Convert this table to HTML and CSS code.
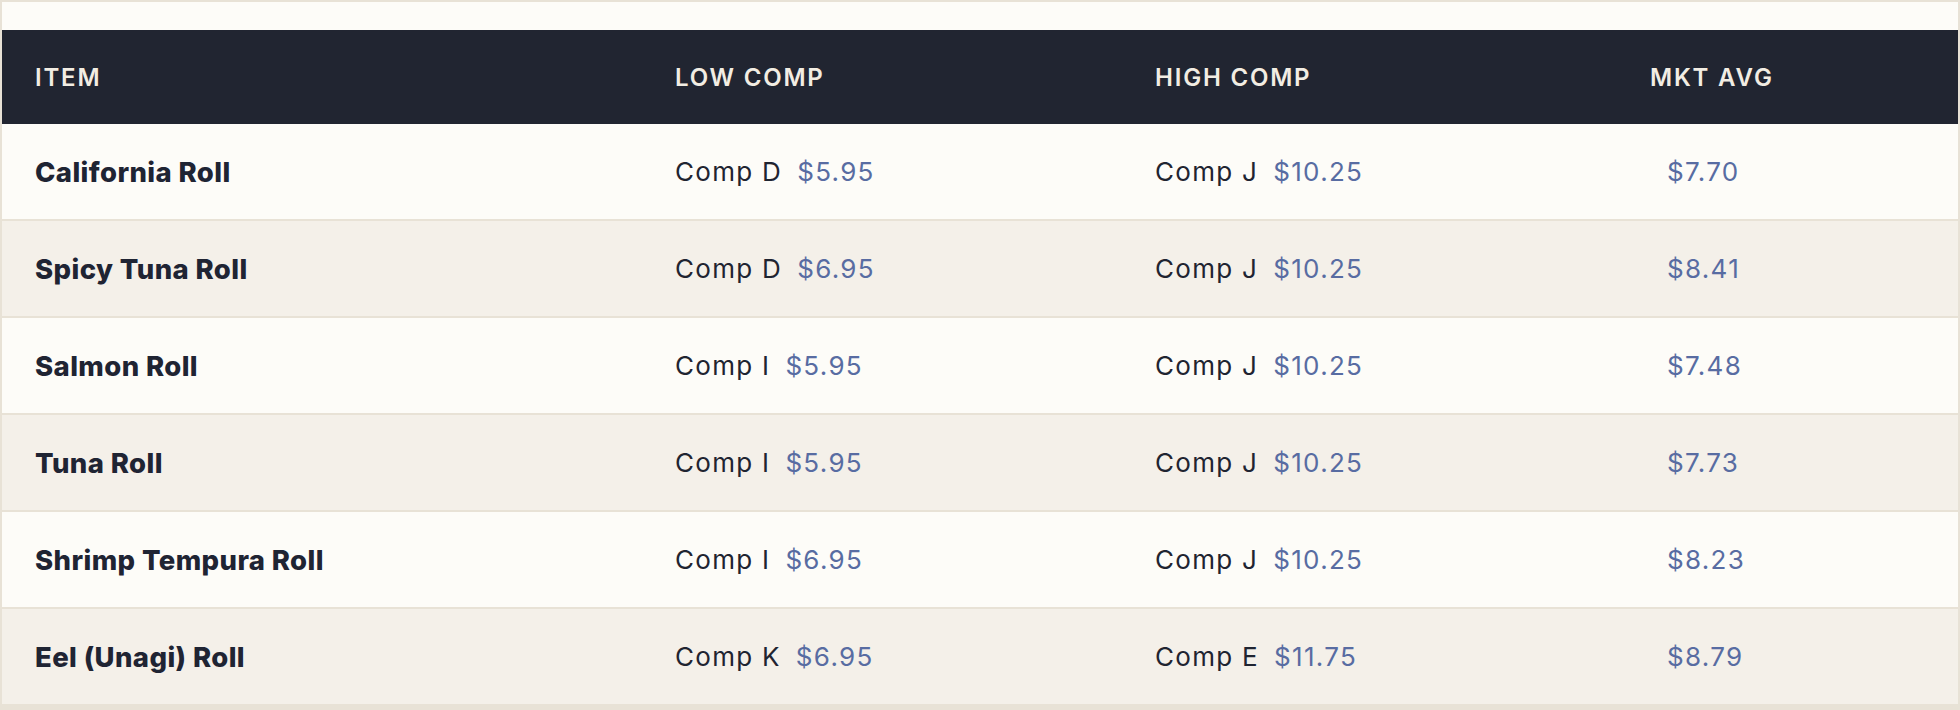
FILE: index.html
```html
<!DOCTYPE html>
<html lang="en">
<head>
<meta charset="utf-8">
<title>Comp Pricing</title>
<link rel="stylesheet" href="styles.css">
</head>
<body>
<div class="card">
  <table class="comp-table">
    <colgroup>
      <col class="c-item">
      <col class="c-low">
      <col class="c-high">
      <col class="c-avg">
    </colgroup>
    <thead>
      <tr>
        <th>ITEM</th>
        <th>LOW COMP</th>
        <th>HIGH COMP</th>
        <th>MKT AVG</th>
      </tr>
    </thead>
    <tbody>
      <tr>
        <td class="item">California Roll</td>
        <td><span class="comp">Comp D</span><span class="price">$5.95</span></td>
        <td><span class="comp">Comp J</span><span class="price">$10.25</span></td>
        <td class="avg"><span class="price">$7.70</span></td>
      </tr>
      <tr>
        <td class="item">Spicy Tuna Roll</td>
        <td><span class="comp">Comp D</span><span class="price">$6.95</span></td>
        <td><span class="comp">Comp J</span><span class="price">$10.25</span></td>
        <td class="avg"><span class="price">$8.41</span></td>
      </tr>
      <tr>
        <td class="item">Salmon Roll</td>
        <td><span class="comp">Comp I</span><span class="price">$5.95</span></td>
        <td><span class="comp">Comp J</span><span class="price">$10.25</span></td>
        <td class="avg"><span class="price">$7.48</span></td>
      </tr>
      <tr>
        <td class="item">Tuna Roll</td>
        <td><span class="comp">Comp I</span><span class="price">$5.95</span></td>
        <td><span class="comp">Comp J</span><span class="price">$10.25</span></td>
        <td class="avg"><span class="price">$7.73</span></td>
      </tr>
      <tr>
        <td class="item">Shrimp Tempura Roll</td>
        <td><span class="comp">Comp I</span><span class="price">$6.95</span></td>
        <td><span class="comp">Comp J</span><span class="price">$10.25</span></td>
        <td class="avg"><span class="price">$8.23</span></td>
      </tr>
      <tr>
        <td class="item">Eel (Unagi) Roll</td>
        <td><span class="comp">Comp K</span><span class="price">$6.95</span></td>
        <td><span class="comp">Comp E</span><span class="price">$11.75</span></td>
        <td class="avg"><span class="price">$8.79</span></td>
      </tr>
    </tbody>
  </table>
</div>
</body>
</html>
```

FILE: styles.css
```css
html, body {
  margin: 0;
  padding: 0;
  background: #e8e2d6;
}

body {
  font-family: "Inter", "Noto Sans", sans-serif;
  color: #1f2431;
}

.card {
  border: 2px solid #e8e2d6;
  background: #fdfcf8;
  padding-top: 28px;
}

.comp-table {
  width: 100%;
  border-collapse: collapse;
  table-layout: fixed;
}

.c-item { width: 640px; }
.c-low { width: 480px; }
.c-high { width: 495px; }

.comp-table th {
  background: #212531;
  color: #f2ede3;
  height: 94px;
  padding: 0 0 0 33px;
  text-align: left;
  font-size: 24px;
  font-weight: 600;
  letter-spacing: 1.8px;
  vertical-align: middle;
}

.comp-table td {
  height: 95px;
  padding: 0 0 0 33px;
  border-bottom: 2px solid #e8e2d6;
  font-size: 26px;
  letter-spacing: 1.3px;
  vertical-align: middle;
  white-space: nowrap;
}

.comp-table tbody tr:nth-child(odd) td {
  background: #fdfcf8;
}

.comp-table tbody tr:nth-child(even) td {
  background: #f4f0e9;
}

.comp-table td.item {
  font-weight: 800;
  font-size: 27.5px;
  letter-spacing: 0.4px;
  color: #1f2433;
}

.comp {
  color: #1f2431;
  margin-right: 15px;
}

.price {
  color: #586ca2;
}

.comp-table td.avg {
  padding-left: 50px;
}
```
